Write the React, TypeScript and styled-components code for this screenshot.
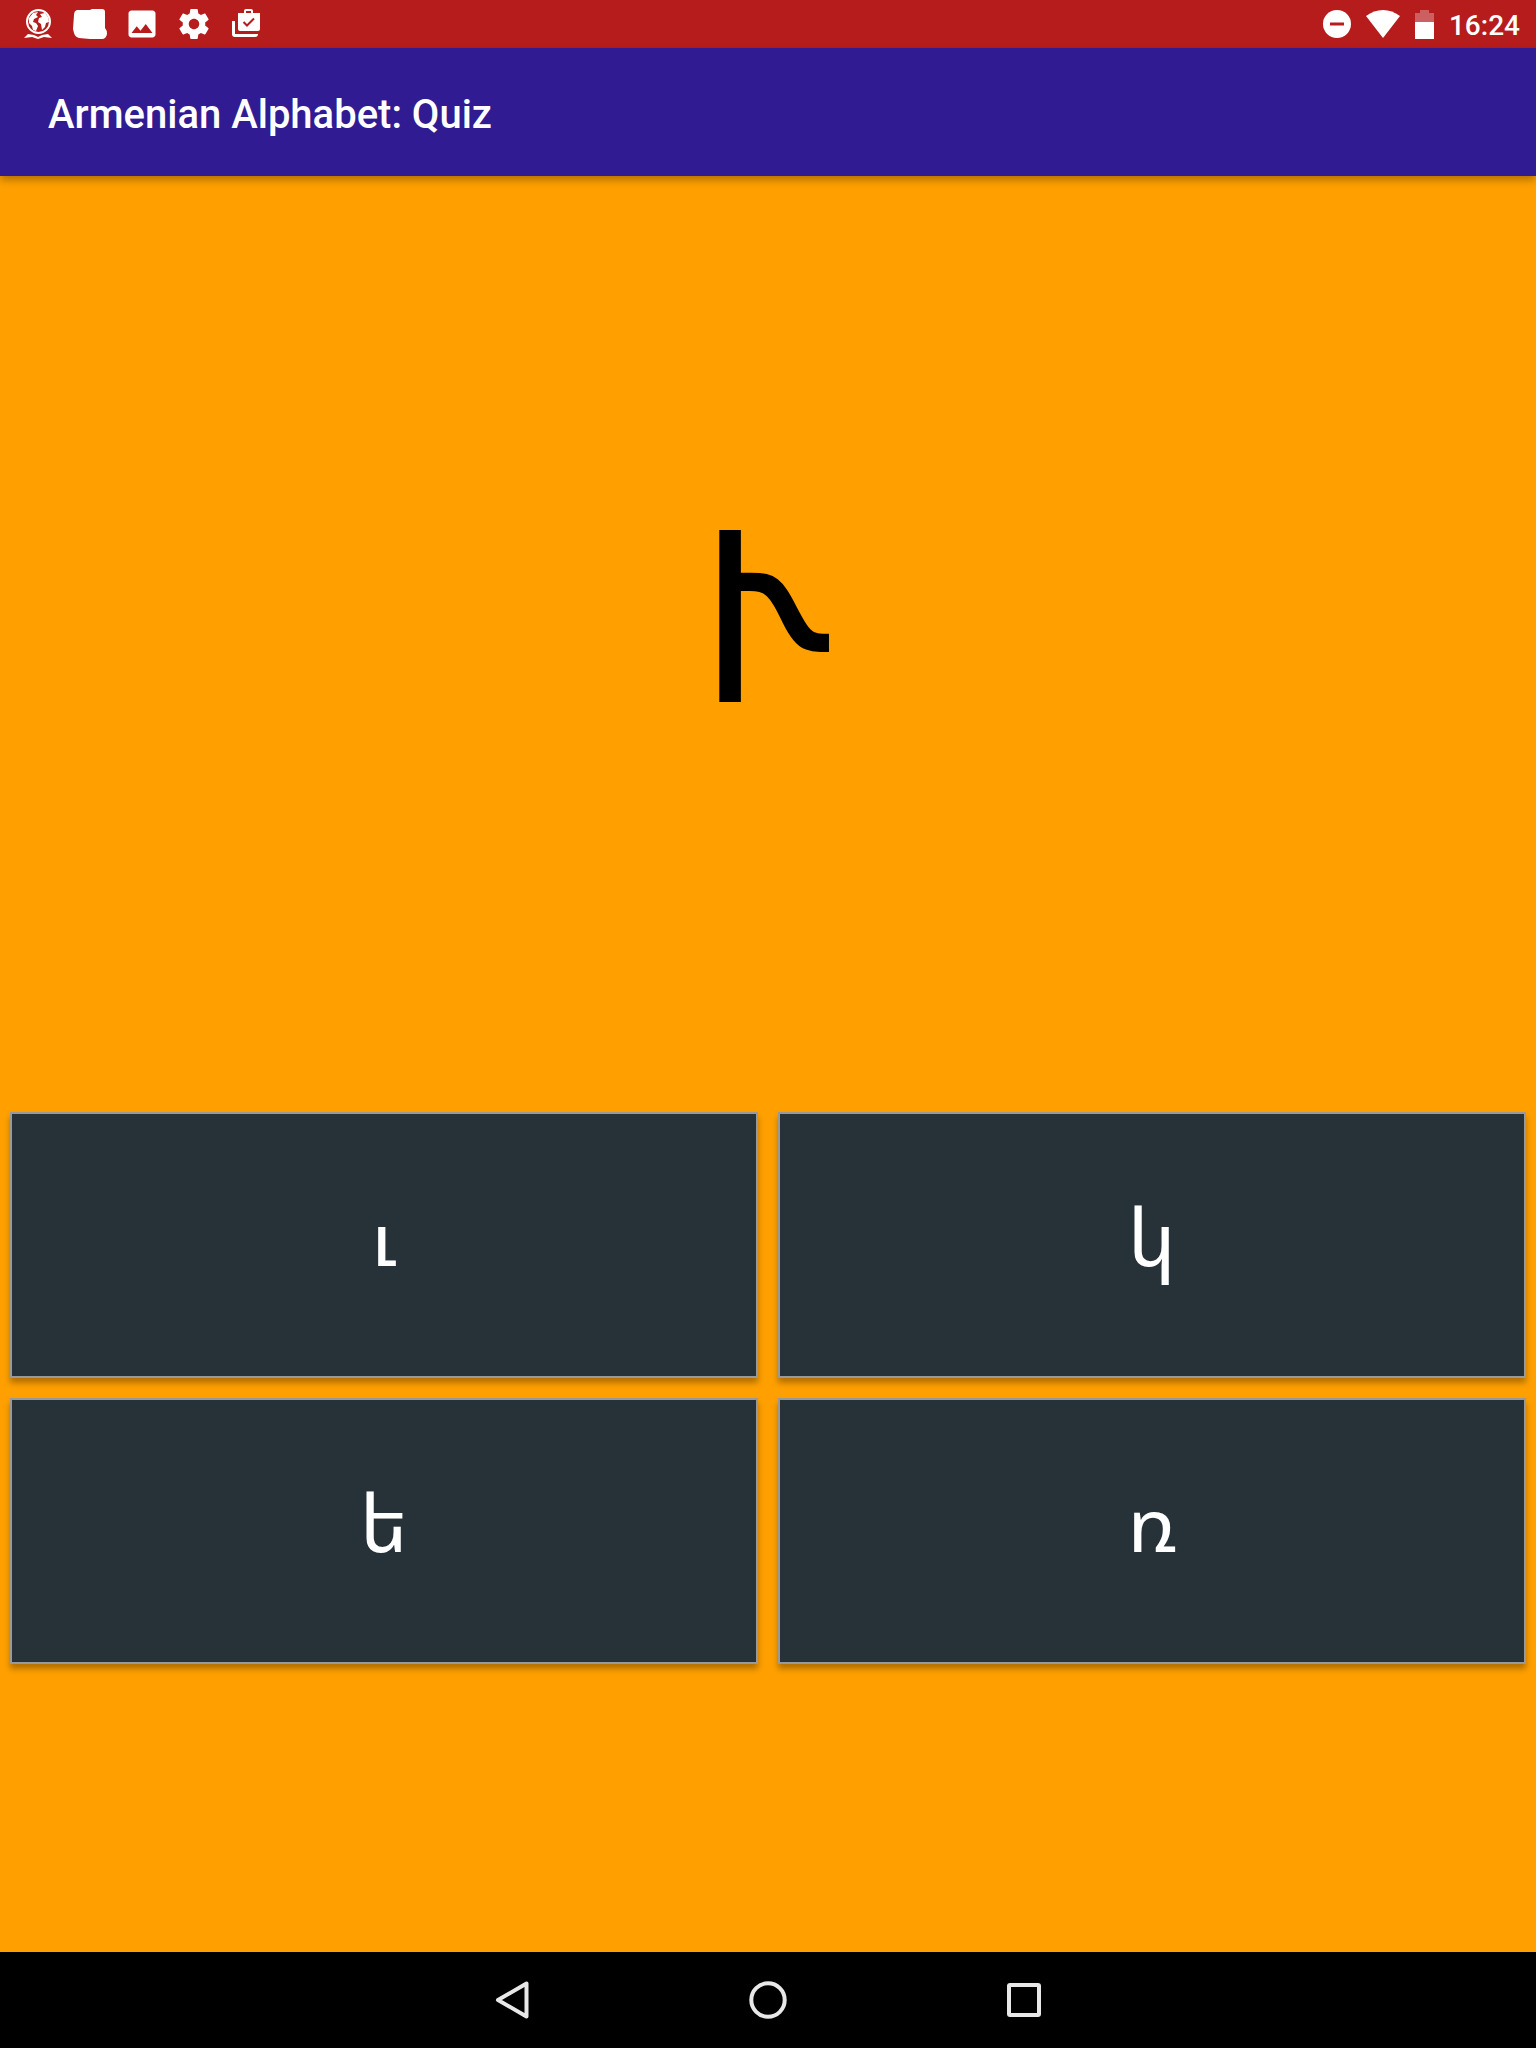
import React from "react";
import styled, { createGlobalStyle } from "styled-components";

const GlobalStyle = createGlobalStyle`
  *, *::before, *::after { box-sizing: border-box; }
  body { margin: 0; background: #000; font-family: Roboto, sans-serif; }
  svg { display: block; }
`;

const Screen = styled.div`
  min-height: 100vh;
  display: flex;
  flex-direction: column;
  background: #ffa000;
`;

const StatusBar = styled.div`
  height: 48px;
  padding: 0 16px 0 20px;
  display: flex;
  align-items: center;
  justify-content: space-between;
  background: #b71c1c;
  color: #fff;
`;

const IconRow = styled.div<{ $gap: number }>`
  display: flex;
  align-items: center;
  gap: ${(p) => p.$gap}px;
`;

const Clock = styled.time`
  padding-top: 3px;
  font-size: 28px;
  font-weight: 500;
  line-height: 45px;
`;

const AppBar = styled.header`
  position: relative;
  height: 128px;
  padding: 6px 48px 0;
  display: flex;
  align-items: center;
  background: #311b92;
  box-shadow: 0 4px 8px rgba(0, 0, 0, 0.3);
`;

const Title = styled.h1`
  margin: 0;
  color: #fff;
  font-size: 40px;
  font-weight: 500;
  line-height: 48px;
`;

const Quiz = styled.main`
  flex: 1;
  display: grid;
  grid-template-rows: 333fr 206fr 100fr;
`;

const Question = styled.p`
  margin: 0;
  padding-bottom: 60px;
  display: flex;
  align-items: center;
  justify-content: center;
  color: #000;
  font-family: "Noto Sans Armenian", "DejaVu Sans", sans-serif;
  font-size: 240px;
  line-height: 280px;
`;

const Answers = styled.div`
  display: grid;
  grid-template-columns: 1fr 1fr;
  grid-auto-rows: 1fr;
  gap: 20px;
  padding: 10px;
`;

const Answer = styled.button`
  border: 2px solid #999;
  border-radius: 0;
  padding: 0 0 20px;
  background: #263238;
  color: #fff;
  font-family: "Noto Sans Armenian", "DejaVu Sans", sans-serif;
  font-size: 80px;
  line-height: 96px;
  box-shadow: 0 5px 6px rgba(0, 0, 0, 0.3);
`;

const NavBar = styled.nav`
  height: 96px;
  display: flex;
  align-items: center;
  justify-content: center;
  gap: 160px;
  background: #000;
`;

const NavButton = styled.button`
  width: 96px;
  height: 96px;
  padding: 0;
  border: 0;
  display: flex;
  align-items: center;
  justify-content: center;
  background: transparent;
  color: #e8e8e8;
`;

const GlobeIcon = () => (
  <svg width="36" height="36" viewBox="0 0 36 36" aria-hidden="true">
    <circle cx="18.500" cy="15.500" r="11.500" fill="none" stroke="#fff" strokeWidth="2" />
    <path fill="#fff" d="M9 12l4-5 5-1-2 3 2 2-4 2-1 3 3 1 2 3-2 5-3-1-1-4-3-3zM20 8l5-1 3 4 1 5-3 1-1 4-3 3-1-6-3-2 1-4 3-1z" />
    <path fill="#fff" d="M4 32l4-4 6 1 4 2 4-2 6-1 4 4-8-1-6 2-6-2z" />
  </svg>
);

const BlankIcon = () => (
  <svg width="36" height="36" viewBox="0 0 36 36" aria-hidden="true">
    <path fill="#fff" d="M5 4h13l2-1h10q3 0 3 3v16q2 2 2 6-1 5-5 5H18l-11-1q-4-1-5-5l-1-4 1-14q0-4 3-5z" />
  </svg>
);

const ImageIcon = () => (
  <svg width="36" height="36" viewBox="0 0 24 24" aria-hidden="true">
    <path fill="#fff" d="M21 19V5c0-1.100-.9-2-2-2H5c-1.100 0-2 .9-2 2v14c0 1.100.9 2 2 2h14c1.100 0 2-.9 2-2zM8.500 13.500l2.500 3.010L14.500 12l4.500 6H5l3.500-4.500z" />
  </svg>
);

const GearIcon = () => (
  <svg width="36" height="36" viewBox="0 0 24 24" aria-hidden="true">
    <path fill="#fff" d="M19.430 12.980c.04-.32.07-.64.07-.98s-.03-.66-.07-.98l2.110-1.650c.19-.15.24-.42.12-.64l-2-3.460c-.12-.22-.39-.3-.61-.22l-2.490 1c-.52-.4-1.080-.73-1.690-.98l-.38-2.650C14.460 2.180 14.250 2 14 2h-4c-.25 0-.46.18-.49.42l-.38 2.650c-.61.25-1.170.59-1.690.98l-2.490-1c-.23-.09-.49 0-.61.22l-2 3.460c-.13.22-.07.49.12.64l2.110 1.650c-.04.32-.07.65-.07.98s.03.66.07.98l-2.110 1.650c-.19.15-.24.42-.12.64l2 3.460c.12.22.39.3.61.22l2.490-1c.52.4 1.080.73 1.690.98l.38 2.650c.03.24.24.42.49.42h4c.25 0 .46-.18.49-.42l.38-2.650c.61-.25 1.170-.59 1.690-.98l2.490 1c.23.09.49 0 .61-.22l2-3.460c.12-.22.07-.49-.12-.64l-2.110-1.650zM12 15.500c-1.930 0-3.500-1.570-3.500-3.500s1.570-3.500 3.500-3.500 3.500 1.570 3.500 3.500-1.570 3.500-3.500 3.500z" />
  </svg>
);

const BagCheckIcon = () => (
  <svg width="36" height="36" viewBox="0 0 36 36" aria-hidden="true">
    <path fill="#fff" d="M4 15h3v13h23q0 3-3 3H7q-3 0-3-3z" />
    <path fill="#fff" fillRule="evenodd" d="M16 7V5q0-2 2-2h5q2 0 2 2v2h7v16q0 2-2 2H12q-2 0-2-2V7zM18 7h5V5h-5z" />
    <path fill="none" stroke="#b71c1c" strokeWidth="2" d="M15.500 16l3.500 3.500 7-7" />
  </svg>
);

const DoNotDisturbIcon = () => (
  <svg width="28" height="28" viewBox="0 0 28 28" aria-hidden="true">
    <circle cx="14" cy="14" r="14" fill="#fff" />
    <path fill="#b71c1c" d="M7 12.500h14v3H7z" />
  </svg>
);

const WifiIcon = () => (
  <svg width="34" height="28" viewBox="0 0 34 28" aria-hidden="true">
    <path fill="#fff" d="M0 6Q8 0 17 0t17 6L17 28z" />
  </svg>
);

const BatteryIcon = () => (
  <svg width="19" height="29" viewBox="0 0 19 29" aria-hidden="true">
    <path fill="#fff" fillOpacity="0.3" d="M5 0h9v3h5v9H0V3h5z" />
    <path fill="#fff" d="M0 12h19v17H0z" />
  </svg>
);

const BackIcon = () => (
  <svg width="40" height="40" viewBox="0 0 40 40" aria-hidden="true">
    <path d="M34.500 3.500v33L6 20z" fill="none" stroke="currentColor" strokeWidth="4" strokeLinejoin="round" />
  </svg>
);

const HomeIcon = () => (
  <svg width="40" height="40" viewBox="0 0 40 40" aria-hidden="true">
    <circle cx="20" cy="20" r="16.700" fill="none" stroke="currentColor" strokeWidth="4" />
  </svg>
);

const RecentsIcon = () => (
  <svg width="40" height="40" viewBox="0 0 40 40" aria-hidden="true">
    <rect x="5" y="5" width="30" height="30" rx="1" fill="none" stroke="currentColor" strokeWidth="4" strokeLinejoin="round" />
  </svg>
);

const answers = ["ւ", "կ", "ե", "ռ"];

export default function App() {
  return (
    <Screen>
      <GlobalStyle />
      <StatusBar>
        <IconRow $gap={16}>
          <GlobeIcon />
          <BlankIcon />
          <ImageIcon />
          <GearIcon />
          <BagCheckIcon />
        </IconRow>
        <IconRow $gap={15}>
          <DoNotDisturbIcon />
          <WifiIcon />
          <BatteryIcon />
          <Clock>16:24</Clock>
        </IconRow>
      </StatusBar>
      <AppBar>
        <Title>Armenian Alphabet: Quiz</Title>
      </AppBar>
      <Quiz>
        <Question>Ւ</Question>
        <Answers>
          {answers.map((letter) => (
            <Answer key={letter} type="button">
              {letter}
            </Answer>
          ))}
        </Answers>
      </Quiz>
      <NavBar>
        <NavButton type="button" aria-label="Back">
          <BackIcon />
        </NavButton>
        <NavButton type="button" aria-label="Home">
          <HomeIcon />
        </NavButton>
        <NavButton type="button" aria-label="Recent apps">
          <RecentsIcon />
        </NavButton>
      </NavBar>
    </Screen>
  );
}
